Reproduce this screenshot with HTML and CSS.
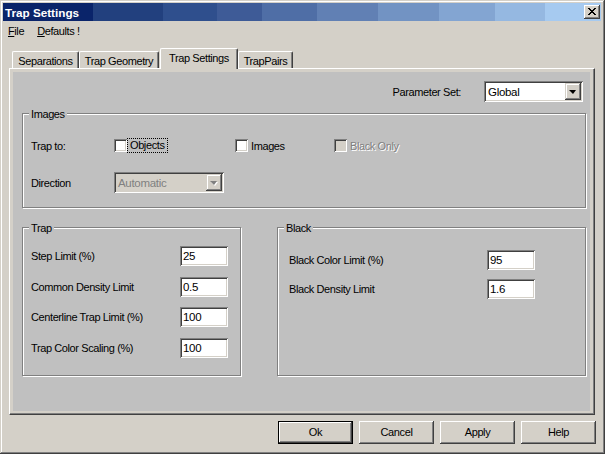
FILE: index.html
```html
<!DOCTYPE html>
<html>
<head>
<meta charset="utf-8">
<title>Trap Settings</title>
<link rel="stylesheet" href="styles.css">
</head>
<body>
<div class="window">
  <div class="titlebar">
    <span class="title">Trap Settings</span>
    <span class="closebtn"><svg width="8" height="7" viewBox="0 0 8 7" shape-rendering="crispEdges"><path d="M0 0h2v1H0zM6 0h2v1H6zM1 1h2v1H1zM5 1h2v1H5zM2 2h4v1H2zM3 3h2v1H3zM2 4h4v1H2zM1 5h2v1H1zM5 5h2v1H5zM0 6h2v1H0zM6 6h2v1H6z" fill="#000"/></svg></span>
  </div>
  <div class="menubar">
    <span class="menuitem"><u>F</u>ile</span>
    <span class="menuitem"><u>D</u>efaults !</span>
  </div>
  <div class="tabs">
    <div class="tabstrip">
      <div class="tab t1">Separations</div>
      <div class="tab t2">Trap Geometry</div>
      <div class="tab sel t3">Trap Settings</div>
      <div class="tab t4">TrapPairs</div>
    </div>
    <div class="page">
      <div class="sheet">
        <div class="paramrow">
          <span class="lbl">Parameter Set:</span>
          <span class="combo param"><span class="ctext">Global</span><span class="dropbtn"><span class="arrow"></span></span></span>
        </div>
        <div class="group images">
          <span class="gtitle">Images</span>
          <div class="irow r1">
            <span class="lbl icol">Trap to:</span>
            <span class="chk c1"><span class="box"></span><span class="focus">Objects</span></span>
            <span class="chk c2"><span class="box"></span><span class="ctxt">Images</span></span>
            <span class="chk dis"><span class="box"></span><span class="ctxt">Black Only</span></span>
          </div>
          <div class="irow r2">
            <span class="lbl icol">Direction</span>
            <span class="combo dcombo"><span class="ctext">Automatic</span><span class="dropbtn"><span class="arrow"></span></span></span>
          </div>
        </div>
        <div class="lowrow">
          <div class="group trap">
            <span class="gtitle">Trap</span>
            <div class="frow"><span class="lbl">Step Limit (%)</span><span class="edit">25</span></div>
            <div class="frow"><span class="lbl">Common Density Limit</span><span class="edit">0.5</span></div>
            <div class="frow"><span class="lbl">Centerline Trap Limit (%)</span><span class="edit">100</span></div>
            <div class="frow"><span class="lbl">Trap Color Scaling (%)</span><span class="edit">100</span></div>
          </div>
          <div class="group black">
            <span class="gtitle">Black</span>
            <div class="frow"><span class="lbl">Black Color Limit (%)</span><span class="edit">95</span></div>
            <div class="frow"><span class="lbl">Black Density Limit</span><span class="edit">1.6</span></div>
          </div>
        </div>
      </div>
    </div>
  </div>
  <div class="buttons">
    <span class="btn default">Ok</span>
    <span class="btn">Cancel</span>
    <span class="btn">Apply</span>
    <span class="btn">Help</span>
  </div>
</div>
</body>
</html>
```
FILE: styles.css
```css
* { box-sizing: border-box; }
html, body { margin: 0; padding: 0; }
body {
  width: 605px;
  height: 454px;
  overflow: hidden;
  background: #d4d0c8;
  font-family: "Liberation Sans", Arial, sans-serif;
  font-size: 11px;
  letter-spacing: -0.4px;
  color: #000;
}
.window {
  width: 605px;
  height: 454px;
  padding: 3px 4px 4px 3px;
  background: #d4d0c8;
  box-shadow: inset -1px -1px #404040, inset 1px 1px #d4d0c8, inset -2px -2px #808080, inset 2px 2px #fff;
  display: flex;
  flex-direction: column;
}
.titlebar {
  height: 18px;
  display: flex;
  align-items: center;
  padding: 0 1px 0 2px;
  background: linear-gradient(to right,
    #0a246a 0 90px, #22407e 90px 160px, #2f4f8d 160px 214px, #3e5b97 214px 259px,
    #4f6ea6 259px 314px, #6180b4 314px 375px, #7293c3 375px 436px, #83a5d2 436px 492px,
    #95b8e1 492px 542px, #a6caf0 542px);
}
.title {
  flex: 1;
  color: #fff;
  font-weight: bold;
  font-size: 11.7px;
  letter-spacing: 0;
}
.closebtn {
  width: 16px;
  height: 14px;
  background: #d4d0c8;
  box-shadow: inset -1px -1px #404040, inset 1px 1px #fff, inset -2px -2px #808080;
  display: flex;
  align-items: center;
  justify-content: center;
  padding: 0 1px 1px 0;
}
.closebtn svg { display: block; }
.menubar {
  height: 19px;
  display: flex;
  align-items: center;
  padding-left: 5px;
  gap: 13px;
}
.tabs {
  margin: 8px 6px 0 6px;
}
.tabstrip {
  height: 20px;
  display: flex;
  align-items: flex-end;
  padding-left: 3px;
}
.tab {
  height: 17px;
  background: #d4d0c8;
  border-top: 1px solid #fff;
  border-left: 1px solid #fff;
  border-right: 1px solid #404040;
  border-radius: 2px 2px 0 0;
  box-shadow: inset -1px 0 #808080;
  display: flex;
  align-items: center;
  justify-content: center;
  padding-top: 1px;
}
.t1 { width: 67px; }
.t2 { width: 80px; }
.t3 { width: 78px; margin-left: 1px; }
.t4 { width: 55px; }
.tab.sel {
  height: 21px;
  margin-bottom: -1px;
  position: relative;
  z-index: 2;
  padding: 0 0 3px 0;
}
.page {
  width: 586px;
  height: 347px;
  border-top: 1px solid #fff;
  border-left: 1px solid #fff;
  border-right: 1px solid #404040;
  border-bottom: 1px solid #404040;
  box-shadow: inset -1px -1px #808080;
  padding: 3px 4px 3px 3px;
}
.sheet {
  height: 339px;
  background: #c0c0c0;
  display: flex;
  flex-direction: column;
}
.paramrow {
  display: flex;
  justify-content: flex-end;
  align-items: center;
  gap: 23px;
  padding: 9px 7px 0 0;
}
.lbl { white-space: nowrap; }
.combo {
  height: 21px;
  background: #fff;
  box-shadow: inset 1px 1px #808080, inset -1px -1px #fff, inset 2px 2px #404040, inset -2px -2px #d4d0c8;
  display: flex;
  padding: 2px;
}
.combo.param { width: 99px; }
.ctext {
  flex: 1;
  padding-left: 2px;
  display: flex;
  align-items: center;
  font-size: 11.5px;
  letter-spacing: -0.3px;
}
.dropbtn {
  width: 16px;
  height: 17px;
  background: #d4d0c8;
  box-shadow: inset -1px -1px #404040, inset 1px 1px #d4d0c8, inset -2px -2px #808080, inset 2px 2px #fff;
  display: flex;
  align-items: center;
  justify-content: center;
  padding: 0 1px 0 0;
}
.arrow {
  width: 0;
  height: 0;
  border-left: 4px solid transparent;
  border-right: 3px solid transparent;
  border-top: 4px solid #000;
  margin-top: 1px;
}
.group {
  position: relative;
  border: 1px solid #808080;
  box-shadow: inset 1px 1px #fff, 1px 1px #fff;
}
.gtitle {
  position: absolute;
  top: -6px;
  left: 6px;
  padding: 0 2px;
  line-height: 12px;
  background: #c0c0c0;
}
.images {
  margin: 11px 0 0 9px;
  width: 564px;
  height: 95px;
  padding: 24px 0 0 8px;
}
.irow {
  display: flex;
  align-items: center;
}
.r1 { height: 15px; }
.r2 { height: 21px; margin-top: 19px; }
.icol { width: 83px; }
.chk {
  display: flex;
  align-items: center;
}
.c1 { width: 121px; }
.c2 { width: 99px; }
.box {
  width: 13px;
  height: 13px;
  background: #fff;
  box-shadow: inset 1px 1px #808080, inset -1px -1px #fff, inset 2px 2px #404040, inset -2px -2px #d4d0c8;
}
.focus {
  margin-left: 1px;
  padding: 0 2px;
  line-height: 13px;
  outline: 1px dotted #000;
  outline-offset: 0;
}
.ctxt { margin-left: 3px; }
.chk.dis .box { background: #d4d0c8; }
.chk.dis .ctxt { color: #808080; text-shadow: 1px 1px #fff; }
.dcombo {
  width: 110px;
  background: #d4d0c8;
  color: #808080;
}
.dcombo .arrow { border-top-color: #808080; filter: drop-shadow(1px 1px 0 #fff); }
.lowrow {
  display: flex;
  margin-top: 19px;
  padding-left: 9px;
}
.trap {
  width: 219px;
  height: 149px;
  padding: 18px 0 0 8px;
  display: flex;
  flex-direction: column;
  gap: 10.7px;
}
.trap .lbl { width: 149px; }
.black {
  margin-left: 36px;
  width: 309px;
  height: 149px;
  padding: 22px 0 0 11px;
  display: flex;
  flex-direction: column;
  gap: 9px;
}
.black .lbl { width: 198px; }
.frow {
  display: flex;
  align-items: center;
}
.edit {
  width: 48px;
  height: 20px;
  background: #fff;
  box-shadow: inset 1px 1px #808080, inset -1px -1px #fff, inset 2px 2px #404040, inset -2px -2px #d4d0c8;
  padding: 2px 2px 2px 3px;
  display: flex;
  align-items: center;
  font-size: 11.5px;
  letter-spacing: -0.3px;
}
.buttons {
  display: flex;
  justify-content: flex-end;
  gap: 6px;
  margin-top: 6px;
  padding-right: 5px;
}
.btn {
  width: 75px;
  height: 23px;
  background: #d4d0c8;
  box-shadow: inset -1px -1px #404040, inset 1px 1px #fff, inset -2px -2px #808080;
  display: flex;
  align-items: center;
  justify-content: center;
  padding-bottom: 1px;
}
.btn.default {
  border: 1px solid #000;
}
```
